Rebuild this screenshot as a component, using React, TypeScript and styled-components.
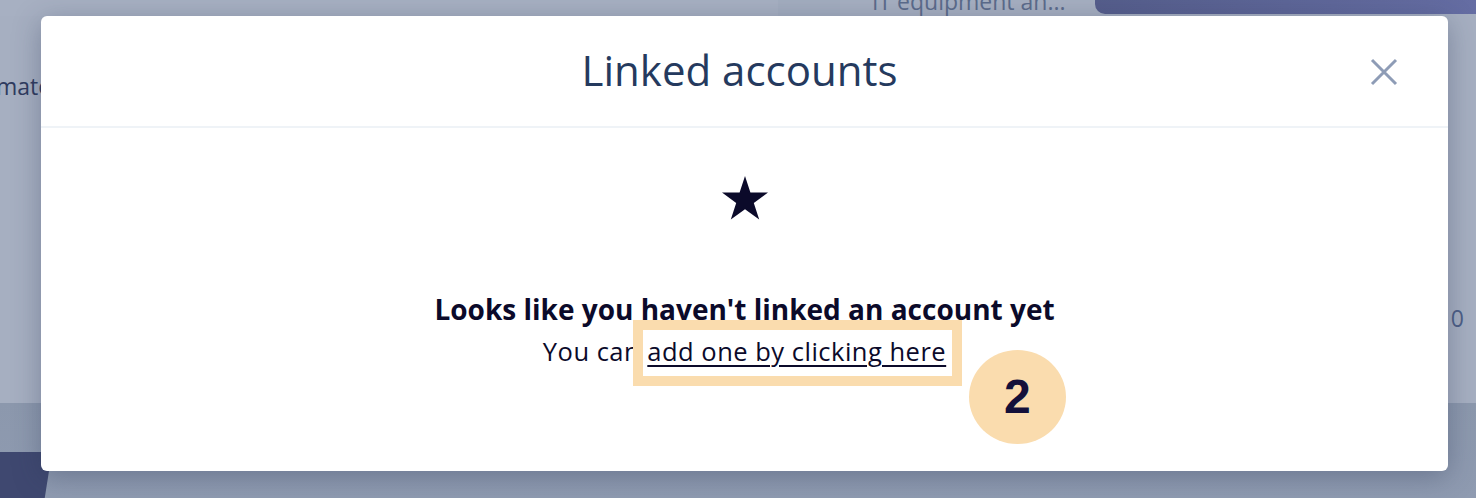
import * as React from "react";
import styled, { createGlobalStyle } from "styled-components";

const GlobalStyle = createGlobalStyle`
  html, body { margin: 0; padding: 0; }
  body { font-family: "Open Sans", "Noto Sans", sans-serif; }
`;

const Page = styled.div`
  position: relative;
  width: 1476px;
  height: 498px;
  overflow: hidden;
  background: #a6afc1;
  display: flex;
  flex-direction: column;
`;

// ---- dimmed page under the modal ----
const TopStrip = styled.div`
  display: flex;
  height: 16px;
  flex: none;
`;

const StripCell = styled.div<{ w: number; tone: string }>`
  width: ${p => p.w}px;
  flex: none;
  background: ${p => p.tone};
`;

const StripLabel = styled.div`
  width: 255px;
  flex: none;
  padding-left: 32px;
  box-sizing: border-box;
  font-size: 23px;
  line-height: 16px;
  margin-top: -7px;
  color: #5b6b8b;
  white-space: nowrap;
`;

const PurpleBar = styled.div`
  flex: 1;
  height: 14px;
  border-bottom-left-radius: 10px;
  background: linear-gradient(90deg, #555d8b, #656da3);
`;

const MiddleArea = styled.div`
  flex: 1;
  display: flex;
  justify-content: space-between;
`;

const LeftText = styled.div`
  font-size: 23px;
  color: #2f3b5f;
  margin-top: 54px;
  margin-left: -4px;
`;

const RightText = styled.div`
  font-size: 23px;
  color: #4d5f86;
  margin-top: 286px;
  margin-right: 12px;
`;

const BottomBand = styled.div`
  height: 95px;
  flex: none;
  background: linear-gradient(180deg, #8c98ad, #8f9bb1);
  display: flex;
  align-items: flex-end;
`;

const NavyShape = styled.div`
  width: 52px;
  height: 46px;
  background: #3f4870;
  clip-path: polygon(0 0, 100% 0, 86% 100%, 0 100%);
`;

// ---- modal ----
const Overlay = styled.div`
  position: absolute;
  inset: 0;
  padding: 16px 28px 0 41px;
  box-sizing: border-box;
`;

const Modal = styled.div`
  width: 1407px;
  height: 455px;
  background: #ffffff;
  border-radius: 6px;
  box-shadow: 0 6px 28px rgba(40, 52, 84, 0.35);
  display: flex;
  flex-direction: column;
`;

const Header = styled.div`
  height: 110px;
  flex: none;
  border-bottom: 2px solid #eff3f7;
  display: flex;
  align-items: center;
  justify-content: center;
  position: relative;
`;

const Title = styled.h2`
  margin: 0;
  font-size: 42px;
  line-height: 56px;
  font-weight: 400;
  color: #253a5e;
  margin-left: -10px;
  margin-top: -2px;
`;

const CloseButton = styled.button`
  position: absolute;
  right: 48px;
  top: 40px;
  width: 32px;
  height: 32px;
  padding: 0;
  border: 0;
  background: none;
  display: flex;
  align-items: center;
  justify-content: center;
`;

const Body = styled.div`
  display: flex;
  flex-direction: column;
  align-items: center;
  padding-top: 48px;
`;

const StarIcon = styled.svg`
  width: 46px;
  height: 44px;
  display: block;
`;

const EmptyTitle = styled.h3`
  margin: 71px 0 0;
  font-size: 28px;
  line-height: 36px;
  font-weight: 700;
  color: #0b0a2a;
`;

const EmptyText = styled.p`
  margin: 7px 0 0;
  font-size: 25.5px;
  line-height: 34px;
  letter-spacing: 0.5px;
  color: #0b0a2a;
`;

const LinkWrap = styled.span`
  position: relative;
`;

const AddLink = styled.a`
  color: #0b0a2a;
  text-decoration: underline;
  text-underline-offset: 4px;
  text-decoration-thickness: 2px;
  cursor: pointer;
`;

const HighlightRing = styled.span`
  position: absolute;
  left: -14px;
  right: -16px;
  top: -14px;
  bottom: -18px;
  border: 10px solid #fadcae;
  pointer-events: none;
`;

const StepBadge = styled.span`
  position: absolute;
  left: calc(100% + 23px);
  top: 16px;
  width: 97px;
  height: 94px;
  border-radius: 50%;
  background: #fadcae;
  color: #13103a;
  font-family: "Liberation Sans", Arial, sans-serif;
  font-weight: 700;
  font-size: 48px;
  display: flex;
  align-items: center;
  justify-content: center;
`;

export default function App() {
  return (
    <>
      <GlobalStyle />
      <Page>
        <TopStrip>
          <StripCell w={778} tone="#a7b0c2" />
          <StripCell w={62} tone="#a3adbf" />
          <StripLabel>IT equipment an...</StripLabel>
          <PurpleBar />
        </TopStrip>
        <MiddleArea>
          <LeftText>mate</LeftText>
          <RightText>0</RightText>
        </MiddleArea>
        <BottomBand>
          <NavyShape />
        </BottomBand>

        <Overlay>
          <Modal>
            <Header>
              <Title>Linked accounts</Title>
              <CloseButton aria-label="Close">
                <svg width="28" height="28" viewBox="0 0 28 28">
                  <path d="M2 2 L26 26 M26 2 L2 26" stroke="#8e9cb6" strokeWidth="3" />
                </svg>
              </CloseButton>
            </Header>
            <Body>
              <StarIcon viewBox="0 0 46 44">
                <polygon
                  fill="#0b0a2a"
                  points="23,0 28.4,16.6 46,16.6 31.8,26.9 37.2,43.6 23,33.3 8.8,43.6 14.2,26.9 0,16.6 17.6,16.6"
                />
              </StarIcon>
              <EmptyTitle>Looks like you haven't linked an account yet</EmptyTitle>
              <EmptyText>
                You can{" "}
                <LinkWrap>
                  <AddLink>add one by clicking here</AddLink>
                  <HighlightRing />
                  <StepBadge>2</StepBadge>
                </LinkWrap>
              </EmptyText>
            </Body>
          </Modal>
        </Overlay>
      </Page>
    </>
  );
}
